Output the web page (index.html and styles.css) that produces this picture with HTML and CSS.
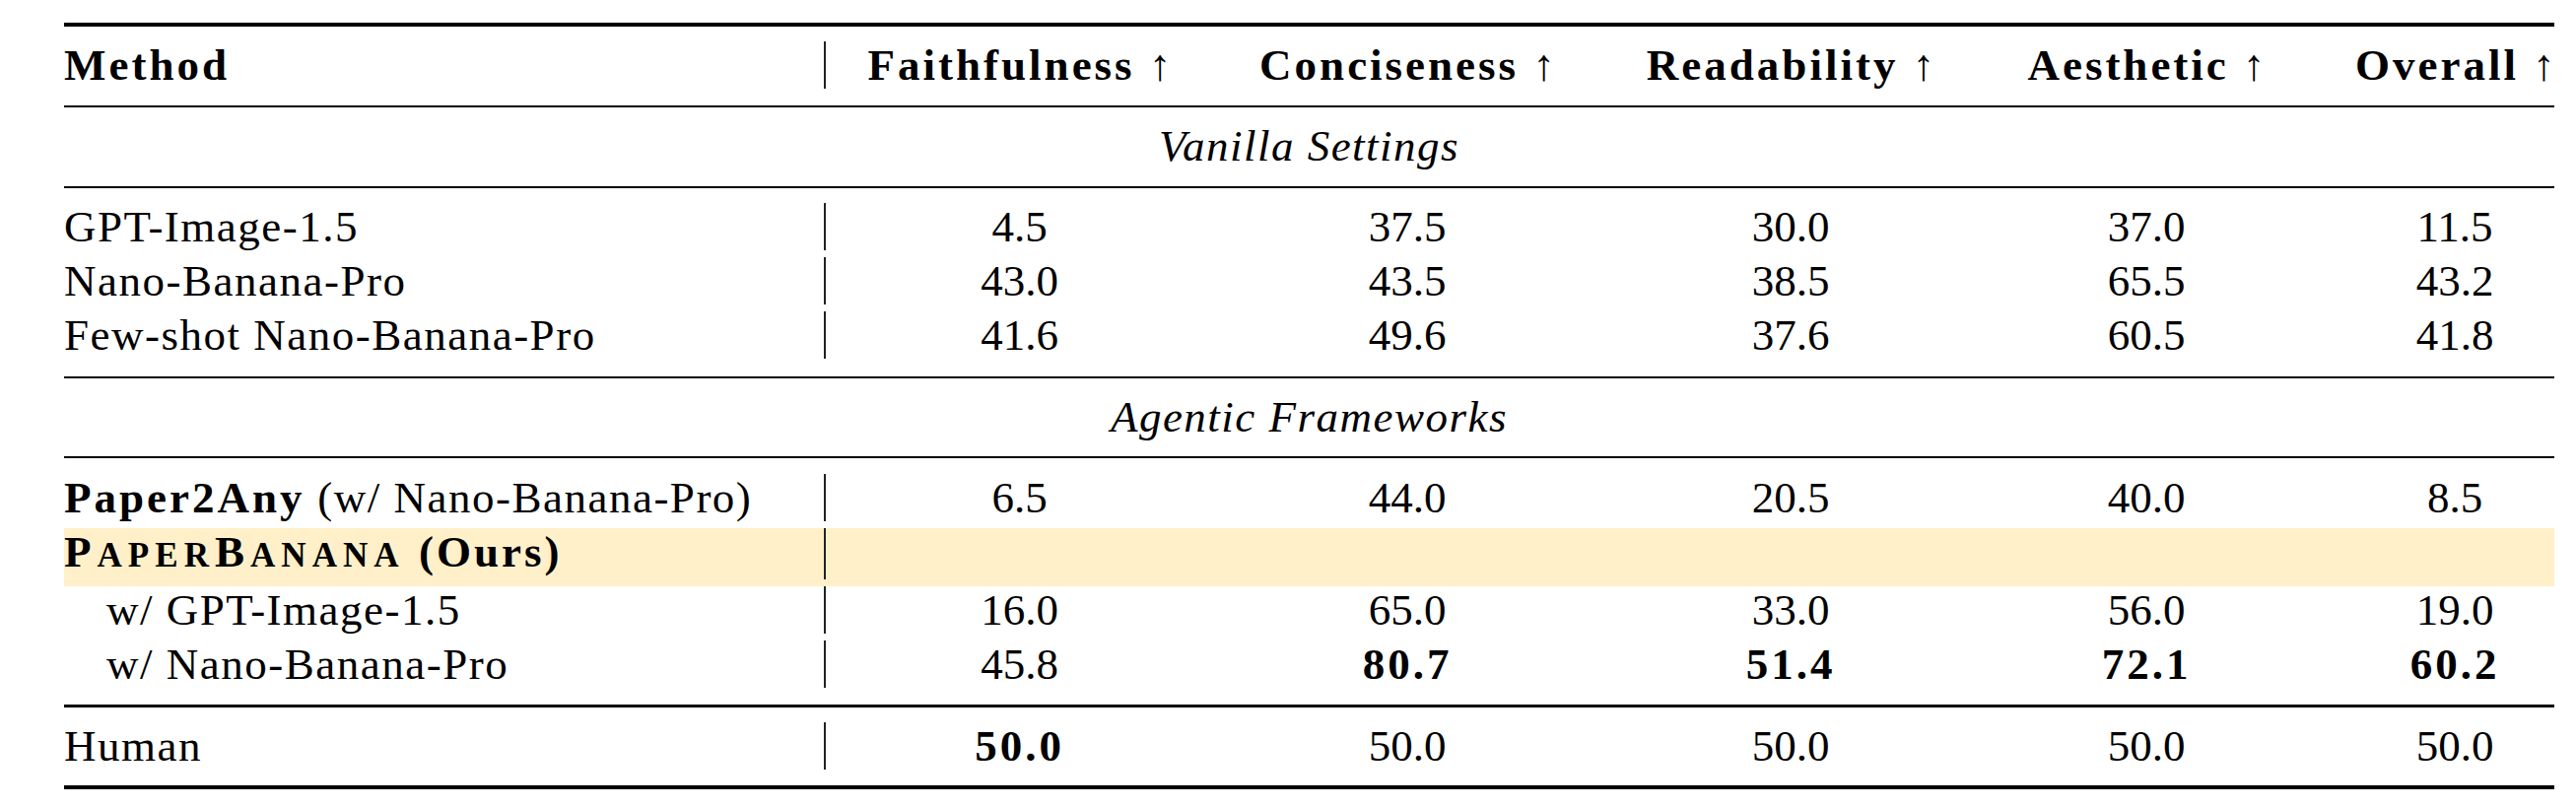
FILE: index.html
```html
<!DOCTYPE html>
<html>
<head>
<meta charset="utf-8">
<link rel="stylesheet" href="styles.css">
</head>
<body class="page">
<div class="tbl">
  <div class="rule heavy"></div>
  <div class="grp g-head">
    <div class="row hdr">
      <div class="c0 b">Method</div>
      <div class="cn b">Faithfulness <span class="arr">↑</span></div>
      <div class="cn b">Conciseness <span class="arr">↑</span></div>
      <div class="cn b">Readability <span class="arr">↑</span></div>
      <div class="cn b">Aesthetic <span class="arr">↑</span></div>
      <div class="cn last b">Overall <span class="arr">↑</span></div>
    </div>
  </div>
  <div class="rule light"></div>
  <div class="grp g-a">
    <div class="row span it">Vanilla Settings</div>
  </div>
  <div class="rule light"></div>
  <div class="grp g-b">
    <div class="row">
      <div class="c0 t">GPT-Image-1.5</div>
      <div class="cn">4.5</div><div class="cn">37.5</div><div class="cn">30.0</div><div class="cn">37.0</div><div class="cn last">11.5</div>
    </div>
    <div class="row">
      <div class="c0 t">Nano-Banana-Pro</div>
      <div class="cn">43.0</div><div class="cn">43.5</div><div class="cn">38.5</div><div class="cn">65.5</div><div class="cn last">43.2</div>
    </div>
    <div class="row">
      <div class="c0 t">Few-shot Nano-Banana-Pro</div>
      <div class="cn">41.6</div><div class="cn">49.6</div><div class="cn">37.6</div><div class="cn">60.5</div><div class="cn last">41.8</div>
    </div>
  </div>
  <div class="rule light"></div>
  <div class="grp g-c">
    <div class="row span it">Agentic Frameworks</div>
  </div>
  <div class="rule light"></div>
  <div class="grp g-d">
    <div class="row">
      <div class="c0 t"><span class="b">Paper2Any</span> (w/ Nano-Banana-Pro)</div>
      <div class="cn">6.5</div><div class="cn">44.0</div><div class="cn">20.5</div><div class="cn">40.0</div><div class="cn last">8.5</div>
    </div>
    <div class="row hl">
      <div class="c0 b"><span class="sc">P<span class="scs">aper</span>B<span class="scs">anana</span></span> (Ours)</div>
      <div class="cn"></div><div class="cn"></div><div class="cn"></div><div class="cn"></div><div class="cn last"></div>
    </div>
    <div class="row">
      <div class="c0 t ind">w/ GPT-Image-1.5</div>
      <div class="cn">16.0</div><div class="cn">65.0</div><div class="cn">33.0</div><div class="cn">56.0</div><div class="cn last">19.0</div>
    </div>
    <div class="row">
      <div class="c0 t ind">w/ Nano-Banana-Pro</div>
      <div class="cn">45.8</div><div class="cn bn">80.7</div><div class="cn bn">51.4</div><div class="cn bn">72.1</div><div class="cn last bn">60.2</div>
    </div>
  </div>
  <div class="rule mid"></div>
  <div class="grp g-e">
    <div class="row">
      <div class="c0 t">Human</div>
      <div class="cn bn">50.0</div><div class="cn">50.0</div><div class="cn">50.0</div><div class="cn">50.0</div><div class="cn last">50.0</div>
    </div>
  </div>
  <div class="rule heavy"></div>
</div>
</body>
</html>
```

FILE: styles.css
```css
body {
  margin: 23px 0 0 65px;
  font-size: 45px;
}

.page {
  font-family: "Liberation Serif", "DejaVu Serif", serif;
  color: #000000;
  background: #ffffff;
}

.tbl {
  width: 2527px;
}

.rule {
  background: #000000;
}
.rule.heavy { height: 4px; }
.rule.mid { height: 3px; }
.rule.light { height: 2px; }

.grp { padding-top: 15px; padding-bottom: 10px; }
.g-b { padding-bottom: 11px; }
.g-c { padding-bottom: 9px; }
.g-d { padding-top: 16px; padding-bottom: 10px; }
.g-e { padding-bottom: 9px; }

.row {
  display: grid;
  grid-template-columns: 773px 393px 394px 384px 338px 245px;
  line-height: 48px;
  padding-bottom: 7px;
  white-space: nowrap;
  font-family: "Liberation Serif", "DejaVu Serif", serif;
}

.row.span {
  display: block;
  text-align: center;
}

.c0 {
  border-right: 2px solid #222222;
  letter-spacing: 1.5px;
  font-family: "Liberation Serif", "DejaVu Serif", serif;
}

.cn {
  text-align: center;
  font-family: "Liberation Serif", "DejaVu Serif", serif;
}
.cn.last {
  padding-left: 43px;
}

.t { letter-spacing: 1.5px; }
.b { font-weight: bold; letter-spacing: 3px; }
.bn { font-weight: bold; letter-spacing: 3px; }
.it { font-style: italic; letter-spacing: 1.5px; }

.arr {
  font-weight: normal;
  letter-spacing: 0;
}

.ind { padding-left: 43px; }

.hl {
  background: #fff0c9;
  margin-left: -42px;
  padding-left: 42px;
}

.sc { letter-spacing: 6px; }
.scs {
  text-transform: uppercase;
  font-size: 0.78em;
}
```
